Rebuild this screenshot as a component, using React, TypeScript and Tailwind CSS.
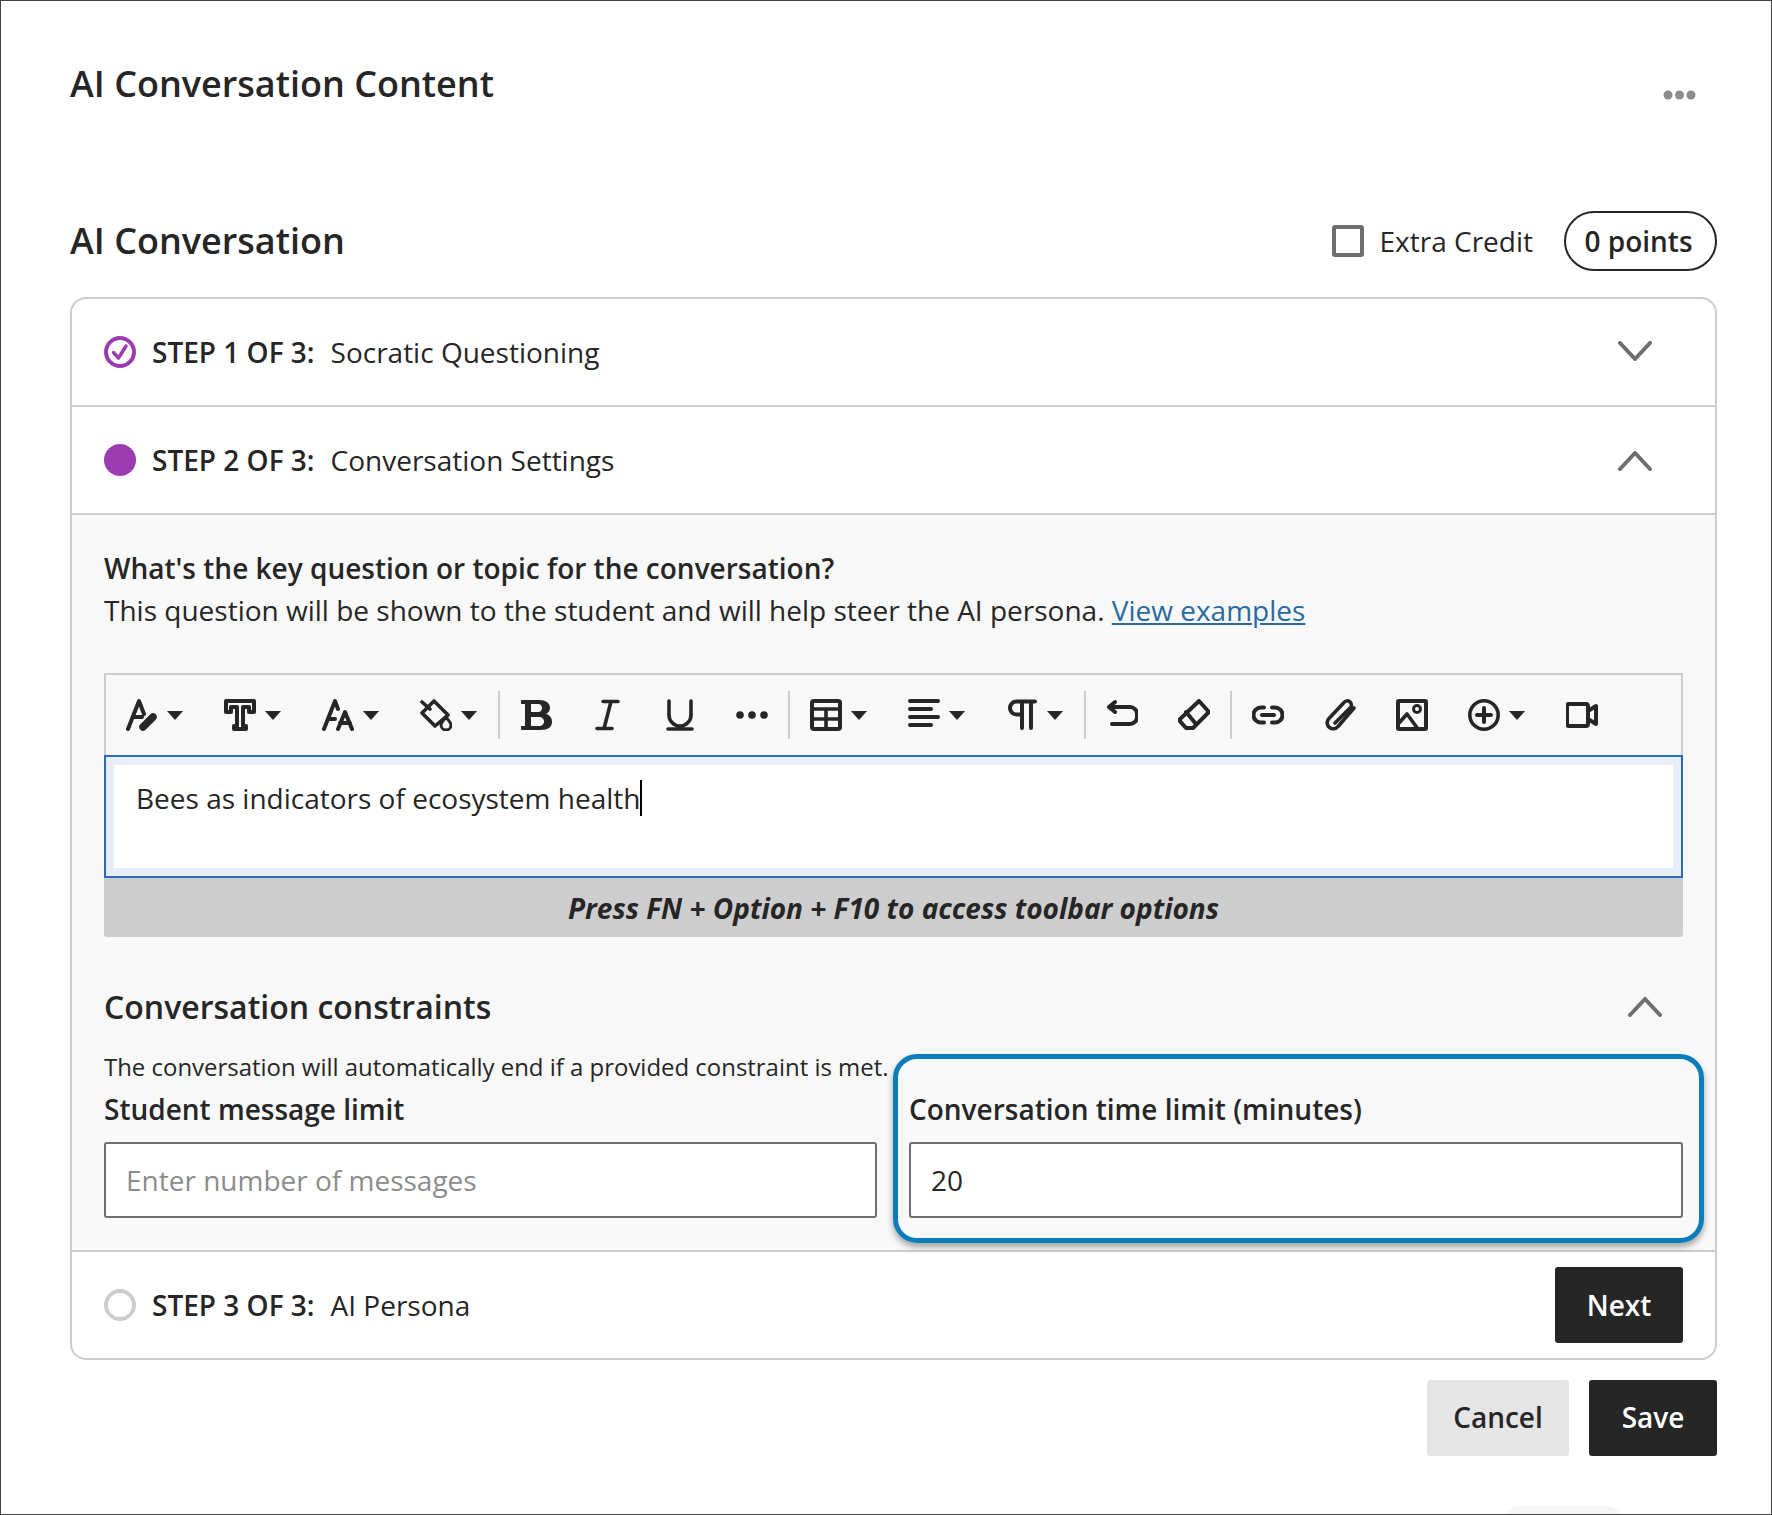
import React from "react";

const ink = "#262626";

const Caret = () => (
  <svg width="16" height="9" viewBox="0 0 16 9" className="ml-[9px] shrink-0">
    <path d="M0 0h16L8 9z" fill={ink} />
  </svg>
);

const Icon: React.FC<{ children: React.ReactNode }> = ({ children }) => (
  <svg width="32" height="32" viewBox="0 0 32 32" fill="none" stroke={ink} strokeWidth="3.6" strokeLinecap="round" strokeLinejoin="round" className="shrink-0">
    {children}
  </svg>
);

const Sep = () => <div className="ml-[20.5px] mr-[20px] h-[48px] w-[2px] shrink-0 bg-[#cdcdcd]" />;

const Drop: React.FC<{ children: React.ReactNode; last?: boolean }> = ({ children, last }) => (
  <div className={last ? "flex items-center" : "mr-[41px] flex items-center"}>
    <Icon>{children}</Icon>
    <Caret />
  </div>
);

const Plain: React.FC<{ children: React.ReactNode; last?: boolean }> = ({ children, last }) => (
  <div className={last ? "flex items-center" : "mr-[40px] flex items-center"}>
    <Icon>{children}</Icon>
  </div>
);

const Toolbar = () => (
  <div className="flex h-[82px] items-center border-x-2 border-t-2 border-[#cdcdcd] pl-[20px]">
    <Drop>
      <path d="M2 30 13 2l5 13M7 18h9" strokeWidth="4" />
      <path d="M17 28 27 18" strokeWidth="7.5" />
    </Drop>
    <Drop>
      <path d="M2 2h28v11h-5V8h-6v19h3v3H10v-3h3V8H7v5H2z" strokeWidth="4" />
    </Drop>
    <Drop>
      <path d="M2 30 13 2l3 8M6 20h7" strokeWidth="4" />
      <path d="M16 30l7-17 7 17M18 24h10" strokeWidth="4" />
    </Drop>
    <Drop last>
      <path d="M2 3l8 7" />
      <path d="M14 2 28 16 15 27 2 14z" />
      <path d="M26 18c-3 4-5 6-5 8a5 5 0 0 0 10 0c0-2-2-4-5-8z" strokeWidth="3" />
    </Drop>
    <Sep />
    <Plain>
      <path fill={ink} stroke="none" fillRule="evenodd" d="M1 2a1 1 0 0 1 1-1h17c7 0 11 3 11 8 0 3-2 5-4 6 4 1 6 4 6 8 0 5-4 8-11 8H2a1 1 0 0 1-1-1v-3h4V5H1zM11 5v8h7c3 0 4-2 4-4s-1-4-4-4zm0 13v9h8c3 0 5-2 5-4.500s-2-4.500-5-4.500z" />
    </Plain>
    <Plain>
      <path d="M11 2.500h15M5 29.500h15M19 2.500 12 29.500" />
    </Plain>
    <Plain>
      <path d="M5 2v14a11 11 0 0 0 22 0V2M4 30h24" />
    </Plain>
    <Plain last>
      <circle cx="4" cy="16" r="3.800" fill={ink} stroke="none" />
      <circle cx="16" cy="16" r="3.800" fill={ink} stroke="none" />
      <circle cx="28" cy="16" r="3.800" fill={ink} stroke="none" />
    </Plain>
    <Sep />
    <Drop>
      <rect x="2" y="2" width="28" height="28" rx="2" strokeWidth="4" />
      <path d="M2 10h28M2 20h28M16 10v20" />
    </Drop>
    <Drop>
      <path d="M2 2h28M2 10h21M2 18h28M2 26h21" strokeWidth="4" />
    </Drop>
    <div className="flex items-center">
      <Icon>
        <path d="M29 2.500H10.500a6.500 6.500 0 0 0 0 13H16M16 3v26M25 3v26" strokeWidth="4" />
      </Icon>
      <Caret />
    </div>
    <Sep />
    <Plain>
      <path d="M9 3 3 8l6 5M3 8h21a7 7 0 0 1 7 7v3a7 7 0 0 1-7 7H6" strokeWidth="4" />
    </Plain>
    <Plain last>
      <path d="M21 2 31 13 15 29H8l-7-8zM8 13l10 12" strokeWidth="4" />
    </Plain>
    <Sep />
    <Plain>
      <path d="M12 8.500H9a7.500 7.500 0 0 0 0 15h3M20 8.500h3a7.500 7.500 0 0 1 0 15h-3M10 16h12" strokeWidth="4" />
    </Plain>
    <Plain>
      <path d="M30 9 14 27.500a6 6 0 0 1-9.500-7.500L20 3.500a4 4 0 0 1 6.500 5L11 24" />
    </Plain>
    <Plain>
      <rect x="2" y="2" width="28" height="28" rx="1" strokeWidth="4" />
      <circle cx="21" cy="10" r="3.500" strokeWidth="3" />
      <path d="M3 24l8-9 11 15" />
    </Plain>
    <Drop>
      <circle cx="16" cy="16" r="14.200" />
      <path d="M16 9v14M9 16h14" strokeWidth="4" />
    </Drop>
    <div className="flex items-center">
      <Icon>
        <path d="M3 5h17a2 2 0 0 1 2 2v18a2 2 0 0 1-2 2H3a2 2 0 0 1-2-2V7a2 2 0 0 1 2-2zM22 12l8-5v18l-8-5" strokeWidth="4" />
      </Icon>
    </div>
  </div>
);

const Chevron: React.FC<{ up?: boolean }> = ({ up }) => (
  <svg width="34" height="20" viewBox="0 0 34 20" fill="none" stroke="#6e6e6e" strokeWidth="4" strokeLinecap="round" strokeLinejoin="round">
    <path d={up ? "M2 18 17 2l15 16" : "M2 2l15 16L32 2"} />
  </svg>
);

const StepTitle: React.FC<{ step: string; name: string }> = ({ step, name }) => (
  <div className="flex items-baseline text-[28px] leading-[38px] text-[#262626]">
    <span className="font-semibold">{step}</span>
    <span className="ml-[16px]">{name}</span>
  </div>
);

export default function App() {
  return (
    <div className="relative h-[1515px] w-[1772px] overflow-hidden border border-[#444444] bg-white font-['Open_Sans',sans-serif] text-[#262626]">
      <div className="flex items-start justify-between pl-[69px] pr-[75px] pt-[60px]">
        <h1 className="text-[36px] font-semibold leading-[46px]">AI Conversation Content</h1>
        <svg width="33" height="10" viewBox="0 0 33 10" className="mt-[29px]">
          <circle cx="5" cy="5" r="4.500" fill="#8c8c8c" />
          <circle cx="16.500" cy="5" r="4.500" fill="#8c8c8c" />
          <circle cx="28" cy="5" r="4.500" fill="#8c8c8c" />
        </svg>
      </div>

      <div className="ml-[69px] mr-[54px] mt-[104px] flex h-[60px] items-center justify-between">
        <h2 className="text-[36px] font-semibold leading-[46px]">AI Conversation</h2>
        <div className="flex items-center">
          <div className="h-[32px] w-[32px] rounded-[3px] border-[4px] border-[#6e6e6e] bg-white" />
          <span className="ml-[16px] text-[28px] leading-[38px]">Extra Credit</span>
          <div className="ml-[31px] flex h-[60px] w-[153px] items-center justify-center rounded-full border-2 border-[#262626] pr-[4px] text-[28px] font-semibold">
            0 points
          </div>
        </div>
      </div>

      <div className="ml-[69px] mr-[54px] mt-[26px] h-[1063px] overflow-hidden rounded-[16px] border-2 border-[#cdcdcd]">
        <div className="flex h-[108px] items-center justify-between border-b-2 border-[#cdcdcd] pl-[32px] pr-[63px]">
          <div className="flex items-center">
            <svg width="32" height="32" viewBox="0 0 32 32" fill="none" stroke="#9c3cb0" className="mr-[16px]">
              <circle cx="16" cy="16" r="14" strokeWidth="4" />
              <path d="M9.500 16.500 14.500 22 22 10" strokeWidth="3.500" strokeLinecap="round" strokeLinejoin="round" />
            </svg>
            <StepTitle step="STEP 1 OF 3:" name="Socratic Questioning" />
          </div>
          <div className="-mt-[3px]">
            <Chevron />
          </div>
        </div>

        <div className="flex h-[108px] items-center justify-between border-b-2 border-[#cdcdcd] pl-[32px] pr-[63px]">
          <div className="flex items-center">
            <div className="mr-[16px] h-[32px] w-[32px] rounded-full bg-[#9c3cb0]" />
            <StepTitle step="STEP 2 OF 3:" name="Conversation Settings" />
          </div>
          <div className="mt-[2px]">
            <Chevron up />
          </div>
        </div>

        <div className="h-[737px] border-b-2 border-[#cdcdcd] bg-[#f8f8f8] pl-[32px] pr-[32px] pt-[34px]">
          <p className="text-[28px] font-semibold leading-[38px]">What's the key question or topic for the conversation?</p>
          <p className="mt-[4px] text-[28px] leading-[38px]">
            This question will be shown to the student and will help steer the AI persona.{" "}
            <a className="text-[#2a6a9e] underline">View examples</a>
          </p>

          <div className="mt-[44px]">
            <Toolbar />
            <div className="h-[123px] border-2 border-[#2a6bbd] bg-[#e8eef9] p-[8px]">
              <div className="flex h-full items-start bg-white pl-[22px] pt-[14px] text-[28px] leading-[38px]">
                Bees as indicators of ecosystem health
                <span className="mt-[1px] h-[36px] w-[2px] bg-black" />
              </div>
            </div>
            <div className="flex h-[59px] items-center justify-center rounded-b-[3px] bg-[#cdcdcd] text-[28px] font-bold italic">
              Press FN + Option + F10 to access toolbar options
            </div>
          </div>

          <div className="mt-[48px] flex h-[44px] items-center justify-between pr-[21px]">
            <h3 className="text-[32px] font-semibold leading-[44px]">Conversation constraints</h3>
            <Chevron up />
          </div>
          <p className="mt-[20px] text-[23.95px] leading-[36px]">The conversation will automatically end if a provided constraint is met.</p>

          <div className="mt-[5px] grid grid-cols-[773px_1fr] gap-x-[32px]">
            <div>
              <label className="block text-[28px] font-semibold leading-[38px]">Student message limit</label>
              <div className="mt-[14px] flex h-[76px] items-center rounded-[3px] border-2 border-[#6e6e6e] bg-white pl-[20px] text-[28px] text-[#8c8c8c]">
                Enter number of messages
              </div>
            </div>
            <div>
              <label className="block text-[28px] font-semibold leading-[38px]">Conversation time limit (minutes)</label>
              <div className="mt-[14px] flex h-[76px] items-center rounded-[3px] border-2 border-[#6e6e6e] bg-white pl-[20px] text-[28px]">
                20
              </div>
            </div>
          </div>
        </div>

        <div className="flex h-[104px] items-center justify-between pl-[32px] pr-[32px] pt-[2px]">
          <div className="flex items-center">
            <div className="mr-[16px] h-[32px] w-[32px] rounded-full border-[4px] border-[#cdcdcd]" />
            <StepTitle step="STEP 3 OF 3:" name="AI Persona" />
          </div>
          <button className="flex h-[76px] w-[128px] items-center justify-center rounded-[3px] bg-[#262626] text-[28px] font-semibold text-white">Next</button>
        </div>
      </div>

      <div className="mr-[54px] mt-[20px] flex justify-end gap-x-[20px]">
        <button className="h-[76px] w-[142px] rounded-[3px] bg-[#e5e5e5] pb-[2px] text-[28px] font-semibold">Cancel</button>
        <button className="h-[76px] w-[128px] rounded-[3px] bg-[#262626] pb-[2px] text-[28px] font-semibold text-white">Save</button>
      </div>

      <div className="absolute left-[892px] top-[1053px] h-[189px] w-[811px] rounded-[24px] border-[5px] border-[#0a7dba] shadow-[0_4px_6px_rgba(0,0,0,0.35)]" />
      <div className="absolute left-[1501px] top-[1505px] h-[20px] w-[122px] rounded-t-[18px] bg-[#f6f6f6]" />
    </div>
  );
}
